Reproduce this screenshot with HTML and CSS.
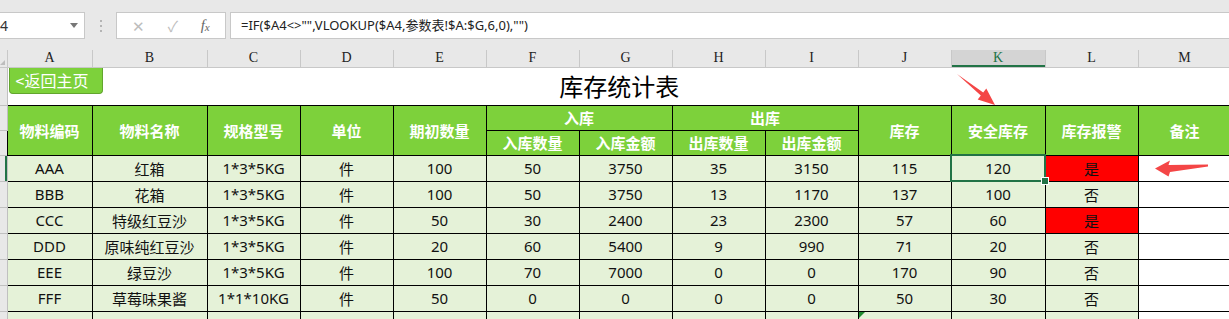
FILE: index.html
```html
<!DOCTYPE html>
<html lang="zh">
<head>
  <meta charset="UTF-8">
  <title>库存统计表</title>
  <link rel="stylesheet" href="styles.css">
</head>
<body>

  <!-- строка формул -->
  <div class="topbar">
    <div class="namebox"><span>4</span><i class="caret"></i></div>
    <div class="grip"><i></i><i></i><i></i></div>
    <div class="fnbtns">
      <span class="btn-x">✕</span>
      <span class="btn-ok">✓</span>
      <span class="btn-fx">f<sub>x</sub></span>
    </div>
    <div class="formula">=IF($A4&lt;&gt;"",VLOOKUP($A4,参数表!$A:$G,6,0),"")</div>
  </div>

  <table class="sheet">
    <colgroup>
      <col style="width:7px">
      <col style="width:85px">
      <col style="width:115px">
      <col style="width:93px">
      <col style="width:93px">
      <col style="width:93px">
      <col style="width:93px">
      <col style="width:93px">
      <col style="width:93px">
      <col style="width:93px">
      <col style="width:93px">
      <col style="width:94px">
      <col style="width:93px">
      <col style="width:93px">
    </colgroup>

    <tr class="letters">
      <th class="corner"><i></i></th>
      <th>A</th><th>B</th><th>C</th><th>D</th><th>E</th><th>F</th><th>G</th>
      <th>H</th><th>I</th><th>J</th><th class="cur">K</th><th>L</th><th>M</th>
    </tr>

    <tr class="title-row">
      <th class="rh"></th>
      <td colspan="13" class="title">
        <a class="home-btn" href="#">&lt;返回主页</a>
        库存统计表
      </td>
    </tr>

    <tr class="head">
      <th class="rh"></th>
      <td rowspan="2">物料编码</td>
      <td rowspan="2">物料名称</td>
      <td rowspan="2">规格型号</td>
      <td rowspan="2">单位</td>
      <td rowspan="2">期初数量</td>
      <td colspan="2">入库</td>
      <td colspan="2">出库</td>
      <td rowspan="2">库存</td>
      <td rowspan="2">安全库存</td>
      <td rowspan="2">库存报警</td>
      <td rowspan="2">备注</td>
    </tr>
    <tr class="head">
      <th class="rh"></th>
      <td>入库数量</td>
      <td>入库金额</td>
      <td>出库数量</td>
      <td>出库金额</td>
    </tr>

    <tr class="row">
      <th class="rh sel-row"></th>
      <td>AAA</td><td>红箱</td><td>1*3*5KG</td><td>件</td><td>100</td>
      <td>50</td><td>3750</td><td>35</td><td>3150</td><td>115</td>
      <td class="sel">120</td><td class="alarm">是</td><td class="memo"></td>
    </tr>
    <tr class="row">
      <th class="rh"></th>
      <td>BBB</td><td>花箱</td><td>1*3*5KG</td><td>件</td><td>100</td>
      <td>50</td><td>3750</td><td>13</td><td>1170</td><td>137</td>
      <td>100</td><td>否</td><td class="memo"></td>
    </tr>
    <tr class="row">
      <th class="rh"></th>
      <td>CCC</td><td>特级红豆沙</td><td>1*3*5KG</td><td>件</td><td>50</td>
      <td>30</td><td>2400</td><td>23</td><td>2300</td><td>57</td>
      <td>60</td><td class="alarm">是</td><td class="memo"></td>
    </tr>
    <tr class="row">
      <th class="rh"></th>
      <td>DDD</td><td>原味纯红豆沙</td><td>1*3*5KG</td><td>件</td><td>20</td>
      <td>60</td><td>5400</td><td>9</td><td>990</td><td>71</td>
      <td>20</td><td>否</td><td class="memo"></td>
    </tr>
    <tr class="row">
      <th class="rh"></th>
      <td>EEE</td><td>绿豆沙</td><td>1*3*5KG</td><td>件</td><td>100</td>
      <td>70</td><td>7000</td><td>0</td><td>0</td><td>170</td>
      <td>90</td><td>否</td><td class="memo"></td>
    </tr>
    <tr class="row">
      <th class="rh"></th>
      <td>FFF</td><td>草莓味果酱</td><td>1*1*10KG</td><td>件</td><td>50</td>
      <td>0</td><td>0</td><td>0</td><td>0</td><td>50</td>
      <td>30</td><td>否</td><td class="memo"></td>
    </tr>
    <tr class="row">
      <th class="rh"></th>
      <td></td><td></td><td></td><td></td><td></td>
      <td></td><td></td><td></td><td></td><td class="note"></td>
      <td></td><td></td><td class="memo"></td>
    </tr>
  </table>

  <!-- красные стрелки поверх листа -->
  <svg class="arrow arrow-down" width="50" height="40" viewBox="950 70 50 40">
    <polygon points="957,74 983.2,92.4 986.3,88.5 995,105 977.7,99.5 980.8,95.6" fill="#f44646"/>
  </svg>
  <svg class="arrow arrow-left" width="60" height="24" viewBox="1150 156 60 24">
    <polygon points="1155,168.5 1170,160.5 1168.5,165 1208,164.5 1208,166.5 1170,172 1168.5,176.5" fill="#f44646"/>
  </svg>

</body>
</html>
```

FILE: styles.css
```css
* {
  box-sizing: border-box;
}
body {
  margin: 0;
  width: 1229px;
  height: 319px;
  overflow: hidden;
  position: relative;
  background: #fff;
  font-family: "Noto Sans", "Noto Sans CJK SC", sans-serif;
}

/* строка формул */
.topbar {
  height: 50px;
  background: #e8e8e8;
  display: flex;
  align-items: flex-start;
  padding-top: 12px;
}
.namebox {
  width: 85px;
  height: 27px;
  background: #fff;
  border: 1px solid #c8c8c8;
  border-left: none;
  display: flex;
  align-items: center;
  justify-content: space-between;
  padding-right: 6px;
  font-size: 14px;
  color: #333;
}
.caret {
  width: 0;
  height: 0;
  border-left: 4px solid transparent;
  border-right: 4px solid transparent;
  border-top: 5px solid #777;
}
.grip {
  width: 31px;
  height: 27px;
  display: flex;
  flex-direction: column;
  align-items: center;
  justify-content: center;
  gap: 3px;
}
.grip i {
  width: 2px;
  height: 2px;
  background: #b4b4b4;
}
.fnbtns {
  width: 110px;
  height: 27px;
  background: #fff;
  border: 1px solid #c8c8c8;
  display: flex;
  align-items: center;
  justify-content: space-around;
  padding: 0 4px;
  color: #bdbdbd;
  font-size: 15px;
}
.btn-fx {
  font-family: "Liberation Serif", serif;
  font-style: italic;
  color: #666;
  font-size: 15px;
}
.btn-fx sub {
  font-size: 11px;
  vertical-align: -1px;
}
.formula {
  flex: 1;
  height: 27px;
  margin-left: 4px;
  background: #fff;
  border: 1px solid #c8c8c8;
  border-right: none;
  padding-left: 10px;
  line-height: 25px;
  font-size: 13px;
  color: #222;
}

/* лист */
.sheet {
  border-collapse: collapse;
  table-layout: fixed;
  width: 1231px;
}
.sheet td,
.sheet th {
  padding: 0;
  text-align: center;
  font-weight: normal;
}

/* буквы столбцов */
.letters th {
  height: 17px;
  background: #e8e8e8;
  border-right: 1px solid #c8c8c8;
  border-bottom: 1px solid #c8c8c8;
  font-family: "Liberation Serif", serif;
  font-size: 14px;
  color: #222;
  line-height: 16px;
}
.letters th.cur {
  background: #d4d4d4;
  color: #217346;
  box-shadow: inset 0 -2px 0 #217346;
}
.letters th.corner {
  position: relative;
}
.corner i {
  position: absolute;
  left: 0;
  bottom: 2px;
  border-left: 5px solid transparent;
  border-bottom: 5px solid #bdbdbd;
}

/* номера строк */
.rh {
  background: #e8e8e8;
  border-bottom: 1px solid #c0c0c0;
  border-right: 1px solid #c0c0c0;
}
.rh.sel-row {
  box-shadow: inset -2px 0 0 #217346;
}

/* заголовок */
.title-row td {
  height: 38px;
}
.title {
  position: relative;
  font-size: 24px;
  color: #000;
  font-family: "Noto Sans CJK SC", sans-serif;
  line-height: 1;
}
.home-btn {
  position: absolute;
  left: 1px;
  top: 0;
  width: 94px;
  height: 26px;
  background: #7dd13b;
  border: 1px solid #62a52e;
  border-top: none;
  border-radius: 0 0 4px 4px;
  color: #fff;
  font-size: 16px;
  line-height: 24px;
  text-decoration: none;
  text-align: left;
  padding-left: 6px;
}

/* шапка таблицы */
.head td {
  height: 25px;
  background: #7dd13b;
  border: 1px solid #000;
  color: #fff;
  font-weight: bold;
  font-size: 15px;
  font-family: "Noto Sans CJK SC", sans-serif;
}

/* строки данных */
.row td {
  height: 26px;
  background: #e5f2d8;
  border: 1px solid #000;
  color: #111;
  font-size: 15px;
}
.row td.alarm {
  background: #ff0000;
}
.row td.memo {
  background: #fff;
}
.row td.sel {
  position: relative;
  outline: 2px solid #217346;
  outline-offset: -1px;
}
.row td.sel::after {
  content: "";
  position: absolute;
  right: -4px;
  bottom: -4px;
  width: 6px;
  height: 6px;
  background: #217346;
  border: 1px solid #fff;
}
.row td.note {
  position: relative;
}
.row td.note::before {
  content: "";
  position: absolute;
  left: 0;
  top: 0;
  border-top: 6px solid #1e8a2e;
  border-right: 6px solid transparent;
}

/* стрелки */
.arrow {
  position: absolute;
}
.arrow-down {
  left: 950px;
  top: 70px;
}
.arrow-left {
  left: 1150px;
  top: 156px;
}
```
